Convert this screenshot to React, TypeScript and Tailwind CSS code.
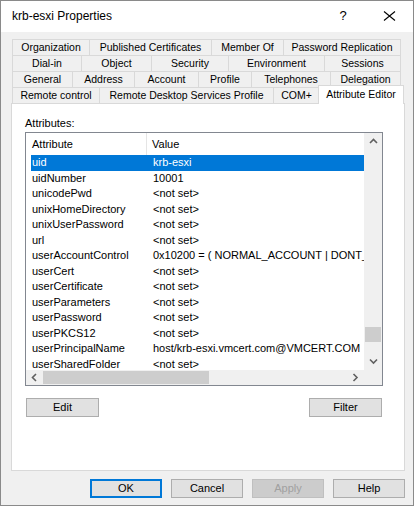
import React from 'react';

const tabRows: { label: string; w: number }[][] = [
  [
    { label: 'Organization', w: 77 },
    { label: 'Published Certificates', w: 122 },
    { label: 'Member Of', w: 72 },
    { label: 'Password Replication', w: 118 },
  ],
  [
    { label: 'Dial-in', w: 69 },
    { label: 'Object', w: 70 },
    { label: 'Security', w: 77 },
    { label: 'Environment', w: 96 },
    { label: 'Sessions', w: 77 },
  ],
  [
    { label: 'General', w: 60 },
    { label: 'Address', w: 62 },
    { label: 'Account', w: 64 },
    { label: 'Profile', w: 53 },
    { label: 'Telephones', w: 79 },
    { label: 'Delegation', w: 71 },
  ],
];

const lastRow = [
  { label: 'Remote control', w: 87 },
  { label: 'Remote Desktop Services Profile', w: 174 },
  { label: 'COM+', w: 46 },
];

const NOT_SET = '<not set>';

const attributes: [string, string][] = [
  ['uid', 'krb-esxi'],
  ['uidNumber', '10001'],
  ['unicodePwd', NOT_SET],
  ['unixHomeDirectory', NOT_SET],
  ['unixUserPassword', NOT_SET],
  ['url', NOT_SET],
  ['userAccountControl', '0x10200 = ( NORMAL_ACCOUNT | DONT_EXPIRE_PASSWORD )'],
  ['userCert', NOT_SET],
  ['userCertificate', NOT_SET],
  ['userParameters', NOT_SET],
  ['userPassword', NOT_SET],
  ['userPKCS12', NOT_SET],
  ['userPrincipalName', 'host/krb-esxi.vmcert.com@VMCERT.COM'],
  ['userSharedFolder', NOT_SET],
];

// small scrollbar chevrons
function Chevron({ dir }: { dir: 'up' | 'down' | 'left' | 'right' }) {
  const d = {
    up: 'M1 5 L4.5 1.5 L8 5',
    down: 'M1 1.5 L4.5 5 L8 1.5',
    left: 'M5 1 L1.5 4.5 L5 8',
    right: 'M1.5 1 L5 4.5 L1.5 8',
  }[dir];
  const horiz = dir === 'up' || dir === 'down';
  return (
    <svg
      width={horiz ? 9 : 7}
      height={horiz ? 7 : 9}
      viewBox={horiz ? '0 0 9 7' : '0 0 7 9'}
    >
      <path d={d} fill="none" stroke="#606060" strokeWidth="1.6" />
    </svg>
  );
}

function Button({
  label,
  isDefault,
  disabled,
}: {
  label: string;
  isDefault?: boolean;
  disabled?: boolean;
}) {
  return (
    <div
      className={
        'w-[72px] h-[19px] flex items-center justify-center ' +
        (isDefault
          ? 'border-2 border-[#0078d7] bg-[#e1e1e1] text-black'
          : disabled
            ? 'border border-[#bfbfbf] bg-[#cccccc] text-[#a0a0a0]'
            : 'border border-[#adadad] bg-[#e1e1e1] text-black')
      }
    >
      {label}
    </div>
  );
}

export default function App() {
  return (
    <div className="w-[414px] h-[506px] border border-[#8a8a8a] bg-[#f0f0f0] flex flex-col font-['Liberation_Sans',Arial,sans-serif] text-[11px] text-black leading-none select-none">
      {/* title bar */}
      <div className="h-[31px] bg-white flex items-center">
        <div className="flex-1 pl-[11px] text-[12px] -mt-[1px]">krb-esxi Properties</div>
        <div className="w-[46px] h-full flex items-center justify-center text-[13px] -mt-[2px]">?</div>
        <div className="w-[46px] h-full flex items-center justify-center -mt-[2px] mr-[1px]">
          <svg width="13" height="10" viewBox="0 0 13 10">
            <path d="M1 0.5 L12 9.5 M12 0.5 L1 9.5" stroke="#000" strokeWidth="1.1" fill="none" />
          </svg>
        </div>
      </div>

      <div className="pl-[10px] pt-[7px]">
        {/* tab strip */}
        {tabRows.map((row, i) => (
          <div key={i} className="flex h-[16px] ml-[1px] text-[10.5px]">
            {row.map((t, j) => (
              <div
                key={t.label}
                style={{ width: t.w }}
                className={
                  'h-full flex items-center justify-center border-t border-l border-[#d9d9d9] ' +
                  (j === row.length - 1 ? 'border-r' : '')
                }
              >
                {t.label}
              </div>
            ))}
          </div>
        ))}
        <div className="flex h-[16px] items-end ml-[1px] text-[10.5px]">
          {lastRow.map((t) => (
            <div
              key={t.label}
              style={{ width: t.w }}
              className="h-full flex items-center justify-center border-t border-l border-[#d9d9d9]"
            >
              {t.label}
            </div>
          ))}
          <div className="relative z-10 w-[86px] h-[19px] -mb-px -ml-px bg-white border-t border-l border-r border-[#d9d9d9] flex items-center justify-center pb-[1px]">
            Attribute Editor
          </div>
        </div>

        {/* tab page */}
        <div className="w-[394px] h-[368px] bg-white border border-[#d9d9d9] pt-[12px] pl-[13px]">
          <div className="h-[14px] flex items-center">Attributes:</div>

          {/* list view */}
          <div className="mt-[2px] w-[358px] h-[254px] border border-[#828790] flex flex-col">
            <div className="flex h-[237px]">
              <div className="flex-1 flex flex-col min-w-0">
                <div className="h-[22px] flex shrink-0">
                  <div className="w-[121px] pl-[6px] flex items-center border-r border-[#e5e5e5]">Attribute</div>
                  <div className="pl-[5px] flex items-center">Value</div>
                </div>
                <div className="h-[215px] overflow-hidden">
                  {attributes.map(([name, value], i) => (
                    <div
                      key={name}
                      className={
                        'h-[15.5px] ml-[5px] flex items-center whitespace-nowrap overflow-hidden ' +
                        (i === 0 ? 'bg-[#0078d7] text-white' : '')
                      }
                    >
                      <div className="w-[116px] pl-[1px] shrink-0">{name}</div>
                      <div className="pl-[6px]">{value}</div>
                    </div>
                  ))}
                </div>
              </div>
              {/* vertical scrollbar */}
              <div className="w-[18px] bg-[#f0f0f0] flex flex-col">
                <div className="h-[17px] flex items-center justify-center">
                  <Chevron dir="up" />
                </div>
                <div className="flex-1">
                  <div className="mt-[177px] h-[15px] mx-[1px] bg-[#cdcdcd]" />
                </div>
                <div className="h-[17px] flex items-center justify-center">
                  <Chevron dir="down" />
                </div>
              </div>
            </div>
            {/* horizontal scrollbar */}
            <div className="flex flex-1">
              <div className="flex-1 bg-[#f0f0f0] flex items-center">
                <div className="w-[17px] h-full flex items-center justify-center">
                  <Chevron dir="left" />
                </div>
                <div className="w-[166px] h-[13px] bg-[#cdcdcd]" />
                <div className="flex-1" />
                <div className="w-[17px] h-full flex items-center justify-center">
                  <Chevron dir="right" />
                </div>
              </div>
              <div className="w-[18px] bg-[#f0f0f0]" />
            </div>
          </div>

          <div className="mt-[12px] ml-[1px] w-[356px] flex justify-between">
            <div className="w-[73px] h-[19px] border border-[#adadad] bg-[#e1e1e1] flex items-center justify-center">Edit</div>
            <div className="w-[73px] h-[19px] border border-[#adadad] bg-[#e1e1e1] flex items-center justify-center">Filter</div>
          </div>
        </div>
      </div>

      {/* dialog buttons */}
      <div className="mt-[8px] ml-[89px] flex gap-[9px]">
        <Button label="OK" isDefault />
        <Button label="Cancel" />
        <Button label="Apply" disabled />
        <Button label="Help" />
      </div>
    </div>
  );
}
